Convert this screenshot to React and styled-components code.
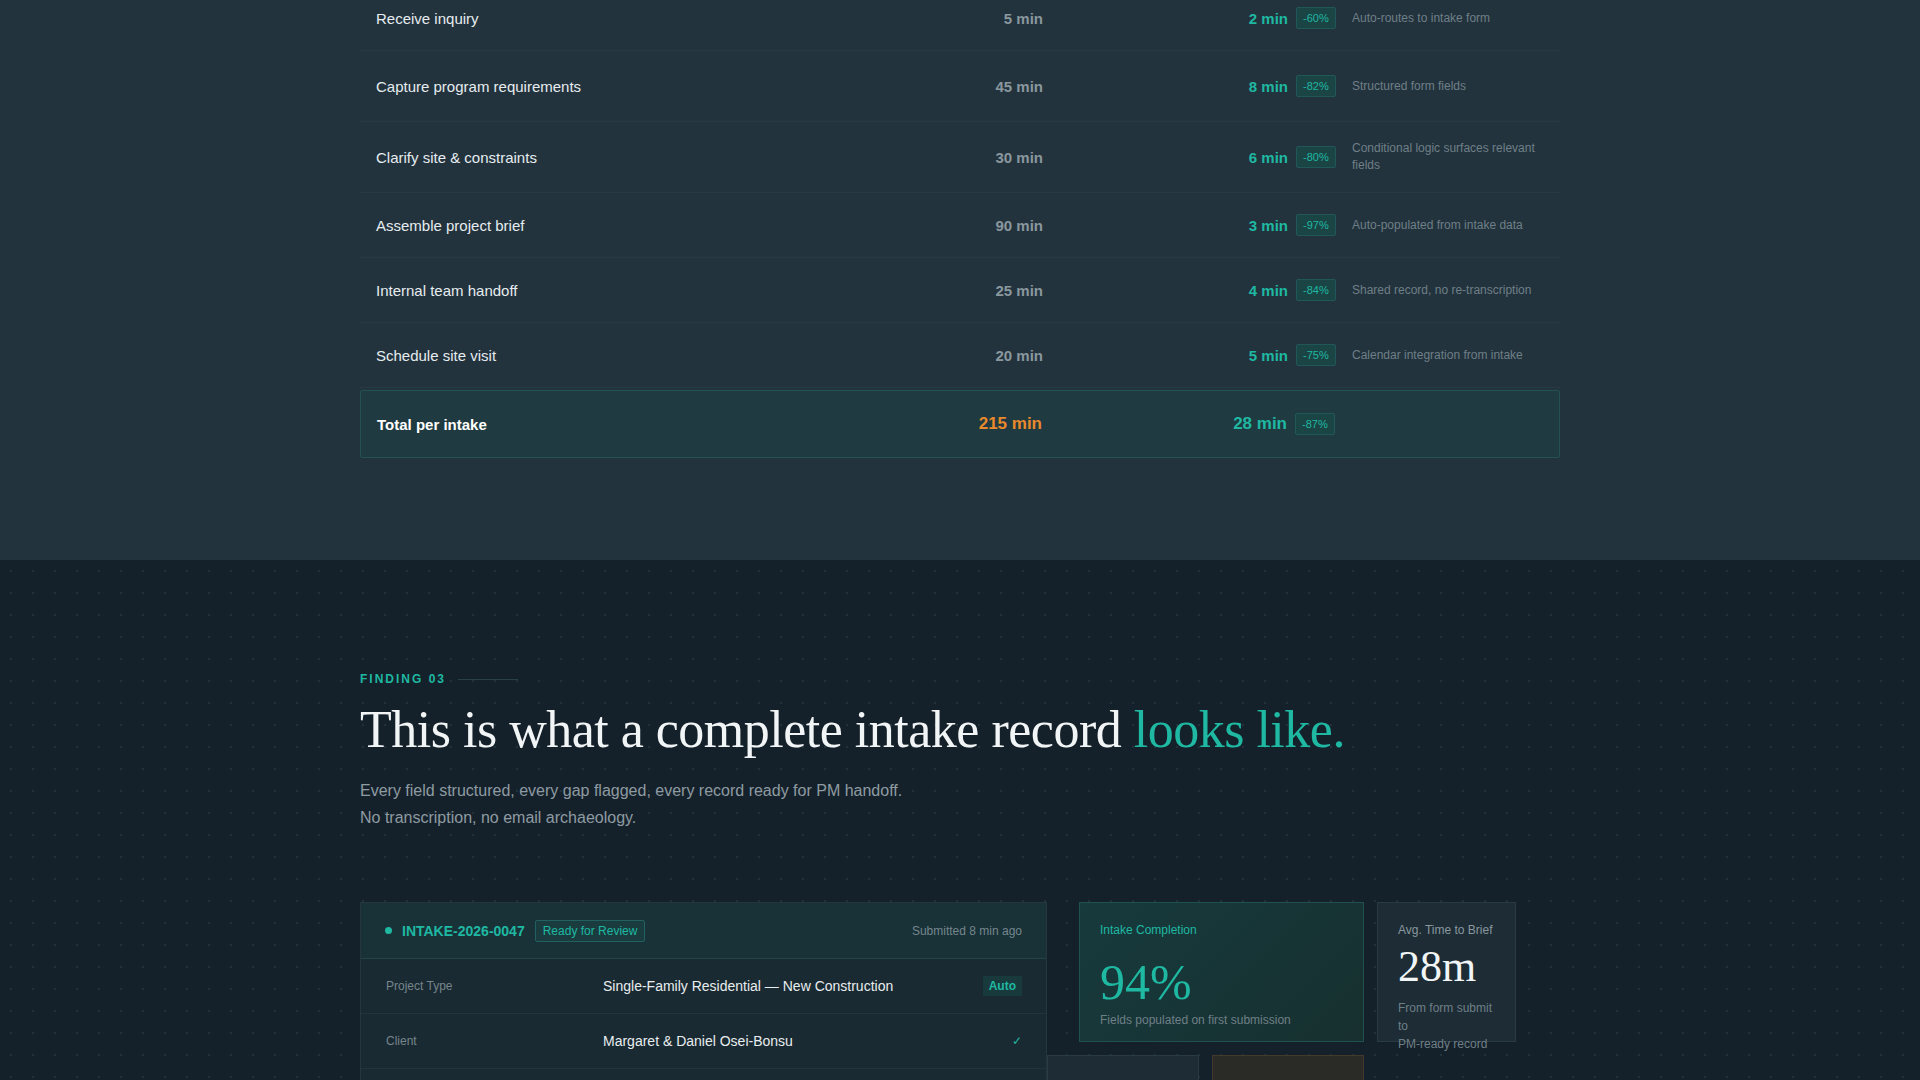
import React from 'react';
import styled, { createGlobalStyle } from 'styled-components';

const Global = createGlobalStyle`
  body { margin: 0; background: #15212a; font-family: "Liberation Sans", Arial, sans-serif; }
`;

const Page = styled.div`
  width: 1920px;
  height: 1080px;
  overflow: hidden;
`;

const TopSection = styled.section`
  background: #22333d;
  height: 560px;
  display: flex;
  justify-content: center;
`;

const Inner = styled.div`
  width: 1200px;
`;

const Table = styled.div`
  margin-top: -14px;
`;

const Row = styled.div`
  display: grid;
  grid-template-columns: 1fr 120px 245px 56px 200px;
  align-items: center;
  padding: 0 16px;
  min-height: ${p => p.$h || 64}px;
  border-bottom: 1px solid #263a44;
  ${p => p.$total && `
    background: #1f3a40;
    border: 1px solid #24524f;
    border-radius: 2px;
    min-height: 66px;
    margin-top: 2px;
  `}
`;

const Label = styled.div`
  color: ${p => (p.$total ? '#ffffff' : '#e6ecef')};
  font-weight: ${p => (p.$total ? 700 : 400)};
  font-size: 15px;
`;

const Before = styled.div`
  text-align: right;
  color: ${p => (p.$total ? '#e8892c' : '#8a979e')};
  font-weight: 700;
  font-size: ${p => (p.$total ? 17 : 15)}px;
`;

const After = styled.div`
  text-align: right;
  color: #1fb8a2;
  font-weight: 700;
  font-size: ${p => (p.$total ? 17 : 15)}px;
`;

const Badge = styled.span`
  justify-self: start;
  margin-left: 8px;
  padding: 4px 6px;
  font-size: 11px;
  color: #1fb8a2;
  background: #1b4445;
  border: 1px solid #22575a;
  border-radius: 2px;
`;

const Note = styled.div`
  color: #6f7f87;
  font-size: 12px;
  line-height: 17px;
  padding-left: 8px;
`;

const BottomSection = styled.section`
  background-color: #15212a;
  background-image: radial-gradient(#22323b 1px, transparent 1px);
  background-size: 22px 22px;
  height: 520px;
  display: flex;
  justify-content: center;
`;

const Eyebrow = styled.div`
  margin-top: 112px;
  display: flex;
  align-items: center;
  gap: 12px;
  color: #1fb8a2;
  font-size: 12px;
  font-weight: 700;
  letter-spacing: 2px;
  &::after { content: ''; width: 60px; height: 1px; background: #2a4048; }
`;

const Heading = styled.h2`
  margin: 14px 0 0;
  font-family: "Liberation Serif", "Times New Roman", serif;
  font-weight: 400;
  font-size: 52px;
  letter-spacing: -0.5px;
  color: #f2f5f6;
  span { color: #1fb8a2; }
`;

const Lead = styled.p`
  margin: 18px 0 0;
  color: #8e9ba2;
  font-size: 16px;
  line-height: 27px;
`;

const Cards = styled.div`
  margin-top: 71px;
  display: grid;
  grid-template-columns: 687px 317px 152px;
  gap: 13px;
  column-gap: 0;
  & > *:nth-child(2) { margin-left: 32px; }
  & > *:nth-child(3) { margin-left: 13px; }
`;

const Record = styled.div`
  background: #1a2a32;
  border: 1px solid #24373f;
  grid-row: span 2;
`;

const RecordHead = styled.div`
  display: flex;
  align-items: center;
  gap: 10px;
  padding: 0 24px;
  height: 55px;
  background: #183238;
  border-bottom: 1px solid #24444a;
`;

const Dot = styled.span`
  width: 7px; height: 7px; border-radius: 50%; background: #1fb8a2;
`;

const RecId = styled.span`
  color: #1fb8a2; font-weight: 700; font-size: 14px;
`;

const Status = styled.span`
  color: #1fb8a2; font-size: 12px; padding: 3px 7px;
  border: 1px solid #236060; background: #1a3c3f; border-radius: 2px;
`;

const Submitted = styled.span`
  margin-left: auto; color: #76858c; font-size: 12px;
`;

const Field = styled.div`
  display: grid;
  grid-template-columns: 217px 1fr auto;
  align-items: center;
  padding: 0 24px 0 25px;
  height: 54px;
  border-bottom: 1px solid #22343c;
`;

const FieldKey = styled.span` color: #76858c; font-size: 12px; `;
const FieldVal = styled.span` color: #e8edef; font-size: 14px; `;
const Auto = styled.span`
  color: #1fb8a2; font-size: 12px; font-weight: 700; padding: 3px 6px; background: #183a3c;
`;
const Check = styled.span` color: #1fb8a2; font-size: 12px; `;

const Stat = styled.div`
  height: 140px;
  box-sizing: border-box;
  padding: 20px 20px;
  background: ${p => (p.$accent ? 'linear-gradient(135deg,#173a3d,#17302f)' : '#1d2c35')};
  border: 1px solid ${p => (p.$accent ? '#21514f' : '#2a3a42')};
`;

const StatLabel = styled.div`
  color: ${p => (p.$accent ? '#1fb8a2' : '#8a979e')}; font-size: 12px;
`;
const StatValue = styled.div`
  font-family: "Liberation Serif", "Times New Roman", serif;
  color: ${p => (p.$accent ? '#1fb8a2' : '#f2f5f6')};
  font-size: ${p => (p.$accent ? 50 : 44)}px;
  line-height: 1;
  margin-top: ${p => (p.$accent ? 20 : 8)}px;
`;
const StatSub = styled.div`
  color: #6f7f87; font-size: 12px; line-height: 18px; margin-top: ${p => (p.$accent ? 4 : 10)}px;
`;

const MiniRow = styled.div`
  display: flex; gap: 13px;
`;
const Mini = styled.div`
  width: 152px; height: 60px; box-sizing: border-box;
  background: ${p => (p.$warm ? '#2a2a26' : '#1d2c35')};
  border: 1px solid ${p => (p.$warm ? '#45392c' : '#2a3a42')};
`;

const rows = [
  ['Receive inquiry', '5 min', '2 min', '-60%', 'Auto-routes to intake form', 64],
  ['Capture program requirements', '45 min', '8 min', '-82%', 'Structured form fields', 70],
  ['Clarify site & constraints', '30 min', '6 min', '-80%', 'Conditional logic surfaces relevant fields', 70],
  ['Assemble project brief', '90 min', '3 min', '-97%', 'Auto-populated from intake data', 64],
  ['Internal team handoff', '25 min', '4 min', '-84%', 'Shared record, no re-transcription', 64],
  ['Schedule site visit', '20 min', '5 min', '-75%', 'Calendar integration from intake', 64],
];

export default function App() {
  return (
    <Page>
      <Global />
      <TopSection>
        <Inner>
          <Table>
            {rows.map(r => (
              <Row key={r[0]} $h={r[5]}>
                <Label>{r[0]}</Label>
                <Before>{r[1]}</Before>
                <After>{r[2]}</After>
                <Badge>{r[3]}</Badge>
                <Note>{r[4]}</Note>
              </Row>
            ))}
            <Row $total>
              <Label $total>Total per intake</Label>
              <Before $total>215 min</Before>
              <After $total>28 min</After>
              <Badge>-87%</Badge>
              <Note />
            </Row>
          </Table>
        </Inner>
      </TopSection>
      <BottomSection>
        <Inner>
          <Eyebrow>FINDING 03</Eyebrow>
          <Heading>This is what a complete intake record <span>looks like.</span></Heading>
          <Lead>
            Every field structured, every gap flagged, every record ready for PM handoff.<br />
            No transcription, no email archaeology.
          </Lead>
          <Cards>
            <Record>
              <RecordHead>
                <Dot />
                <RecId>INTAKE-2026-0047</RecId>
                <Status>Ready for Review</Status>
                <Submitted>Submitted 8 min ago</Submitted>
              </RecordHead>
              <Field>
                <FieldKey>Project Type</FieldKey>
                <FieldVal>Single-Family Residential — New Construction</FieldVal>
                <Auto>Auto</Auto>
              </Field>
              <Field>
                <FieldKey>Client</FieldKey>
                <FieldVal>Margaret &amp; Daniel Osei-Bonsu</FieldVal>
                <Check>✓</Check>
              </Field>
            </Record>
            <Stat $accent>
              <StatLabel $accent>Intake Completion</StatLabel>
              <StatValue $accent>94%</StatValue>
              <StatSub $accent>Fields populated on first submission</StatSub>
            </Stat>
            <Stat>
              <StatLabel>Avg. Time to Brief</StatLabel>
              <StatValue>28m</StatValue>
              <StatSub>From form submit to<br />PM-ready record</StatSub>
            </Stat>
            <MiniRow style={{ gridColumn: 2 }}>
              <Mini />
              <Mini $warm />
            </MiniRow>
          </Cards>
        </Inner>
      </BottomSection>
    </Page>
  );
}
